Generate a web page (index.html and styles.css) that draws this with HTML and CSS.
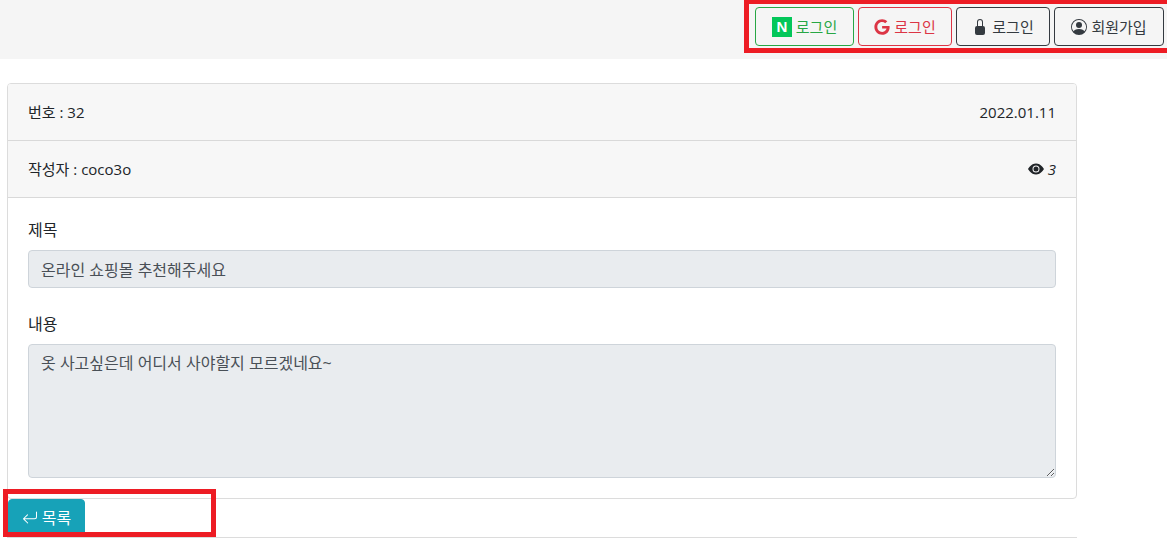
FILE: index.html
```html
<!DOCTYPE html>
<html lang="ko">
<head>
  <meta charset="UTF-8">
  <title>게시글 보기</title>
  <link rel="stylesheet" href="styles.css">
</head>
<body>

<header class="top-bar">
  <a class="btn btn-naver"><span class="naver-mark">N</span>로그인</a>
  <a class="btn btn-google">
    <svg class="icon" viewBox="0 0 488 512"><path d="M488 261.8C488 403.3 391.1 504 248 504 110.8 504 0 393.2 0 256S110.8 8 248 8c66.8 0 123 24.5 166.3 64.9l-67.5 64.9C258.5 52.6 94.3 116.6 94.3 256c0 86.5 69.1 156.6 153.7 156.6 98.2 0 135-70.4 140.8-106.9H248v-85.3h236.1c2.3 12.7 3.9 24.9 3.9 41.4z"/></svg>로그인
  </a>
  <a class="btn btn-dark">
    <svg class="icon" viewBox="0 0 16 16"><path d="M8 1a2 2 0 0 1 2 2v4H6V3a2 2 0 0 1 2-2zm3 6V3a3 3 0 0 0-6 0v4a2 2 0 0 0-2 2v5a2 2 0 0 0 2 2h6a2 2 0 0 0 2-2V9a2 2 0 0 0-2-2z"/></svg>로그인
  </a>
  <a class="btn btn-dark">
    <svg class="icon" viewBox="0 0 16 16"><path d="M11 6a3 3 0 1 1-6 0 3 3 0 0 1 6 0z"/><path fill-rule="evenodd" d="M0 8a8 8 0 1 1 16 0A8 8 0 0 1 0 8zm8-7a7 7 0 0 0-5.468 11.37C3.242 11.226 4.805 10 8 10s4.757 1.225 5.468 2.37A7 7 0 0 0 8 1z"/></svg>회원가입
  </a>
</header>

<main class="content">
  <div class="card">
    <div class="card-row">
      <span>번호 : 32</span>
      <span>2022.01.11</span>
    </div>
    <div class="card-row">
      <span>작성자 : coco3o</span>
      <span class="views">
        <svg class="icon" viewBox="0 0 16 16"><path d="M10.5 8a2.5 2.5 0 1 1-5 0 2.5 2.5 0 0 1 5 0z"/><path d="M0 8s3-5.5 8-5.5S16 8 16 8s-3 5.5-8 5.5S0 8 0 8zm8 3.5a3.5 3.5 0 1 0 0-7 3.5 3.5 0 0 0 0 7z"/></svg>
        <em>3</em>
      </span>
    </div>
    <div class="card-body">
      <div class="field">
        <label>제목</label>
        <input class="control" type="text" value="온라인 쇼핑몰 추천해주세요" readonly>
      </div>
      <div class="field">
        <label>내용</label>
        <textarea class="control area" readonly>옷 사고싶은데 어디서 사야할지 모르겠네요~</textarea>
      </div>
    </div>
  </div>

  <a class="btn btn-list">
    <svg class="icon" viewBox="0 0 16 16"><path fill-rule="evenodd" d="M14.5 1.5a.5.5 0 0 1 .5.5v4.8a2.5 2.5 0 0 1-2.5 2.5H2.707l3.347 3.346a.5.5 0 0 1-.708.708l-4.2-4.2a.5.5 0 0 1 0-.708l4-4a.5.5 0 1 1 .708.708L2.707 8.3H12.5A1.5 1.5 0 0 0 14 6.8V2a.5.5 0 0 1 .5-.5z"/></svg>목록
  </a>
  <hr class="divider">
</main>

<!-- 빨간 표시 박스 -->
<div class="mark mark-top"></div>
<div class="mark mark-bottom"></div>

</body>
</html>
```

FILE: styles.css
```css
* {
  box-sizing: border-box;
}

html, body {
  height: 538px;
  overflow: hidden;
}

body {
  margin: 0;
  background: white;
  color: #212529;
  font-family: "Open Sans", "Noto Sans CJK KR", sans-serif;
  font-size: 16px;
  line-height: 24px;
  position: relative;
}

.icon {
  width: 16px;
  height: 16px;
  fill: currentColor;
  flex: none;
}

.top-bar {
  height: 59px;
  background: #f5f5f5;
  padding: 7px 3px 0 0;
  display: flex;
  justify-content: flex-end;
  align-items: flex-start;
  gap: 4px;
}

.btn {
  display: flex;
  align-items: center;
  justify-content: center;
  gap: 4px;
  height: 39px;
  padding: 0 12px;
  border: 1px solid;
  border-radius: 4px;
  font-size: 15px;
}

.btn-naver {
  width: 99px;
  color: #28a745;
  border-color: #28a745;
}

.btn-google {
  width: 94px;
  color: #dc3545;
  border-color: #dc3545;
}

.btn-dark {
  width: 94px;
  color: #343a40;
  border-color: #343a40;
}

.btn-dark:last-child {
  width: 110px;
}

.naver-mark {
  width: 20px;
  height: 20px;
  background: #03c75a;
  color: white;
  font-family: "Liberation Sans", sans-serif;
  font-size: 15px;
  font-weight: bold;
  line-height: 20px;
  text-align: center;
}

.content {
  width: 1077px;
  padding: 24px 0 0 7px;
}

.card {
  border: 1px solid #dcdcdc;
  border-radius: 4px;
  overflow: hidden;
}

.card-row {
  display: flex;
  justify-content: space-between;
  align-items: center;
  height: 57px;
  padding: 0 20px;
  background: #f7f7f7;
  border-bottom: 1px solid #d9d9d9;
  font-size: 15px;
}

.views {
  display: flex;
  align-items: center;
  gap: 4px;
}

.card-body {
  padding: 20px;
}

.field {
  margin-bottom: 24px;
}

.field:last-child {
  margin-bottom: 0;
}

label {
  display: block;
  margin-bottom: 8px;
}

.control {
  display: block;
  width: 100%;
  height: 38px;
  padding: 6px 12px;
  background: #e9ecef;
  border: 1px solid #ced4da;
  border-radius: 4px;
  color: #495057;
  font: inherit;
}

.area {
  height: 134px;
  resize: vertical;
}

.btn-list {
  width: 77px;
  height: 38px;
  margin-left: 1px;
  padding: 0;
  background: #17a2b8;
  border-color: #17a2b8;
  color: white;
  font-size: 16px;
}

.divider {
  margin: 0;
  border: 0;
  border-top: 1px solid #dcdcdc;
}

.mark {
  position: absolute;
  border: 5px solid #ed1c24;
}

.mark-top {
  left: 744px;
  top: -1px;
  width: 440px;
  height: 54px;
}

.mark-bottom {
  left: 3px;
  top: 489px;
  width: 213px;
  height: 48px;
}
```
